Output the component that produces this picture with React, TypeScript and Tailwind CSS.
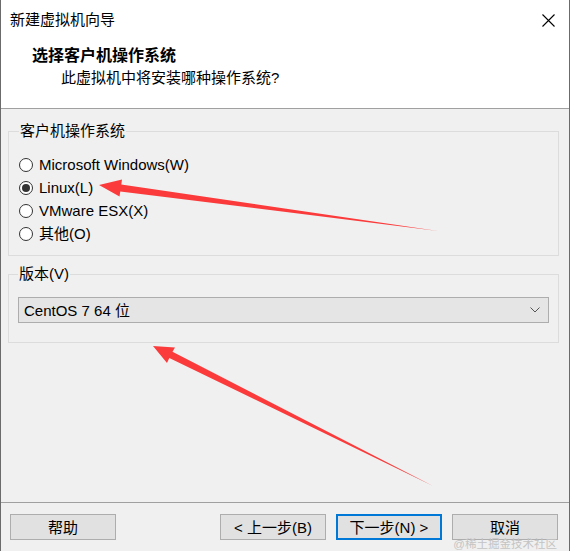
import React from "react";

const FONT = { fontFamily: '"Liberation Sans", "Noto Sans CJK SC", sans-serif' };

const options = [
  { label: "Microsoft Windows(W)", checked: false },
  { label: "Linux(L)", checked: true },
  { label: "VMware ESX(X)", checked: false },
  { label: "其他(O)", checked: false },
];

function Radio({ checked }: { checked: boolean }) {
  return (
    <span className="w-[14px] h-[14px] rounded-full border border-[#333] bg-white flex items-center justify-center shrink-0">
      {checked && <span className="w-[8px] h-[8px] rounded-full bg-[#333]" />}
    </span>
  );
}

function Btn({ label, primary }: { label: string; primary?: boolean }) {
  return (
    <button
      className={`w-[106px] h-[26px] bg-[#e1e1e1] text-[15px] leading-none text-black flex items-center justify-center ${
        primary ? "border-2 border-[#0078d7]" : "border border-[#adadad]"
      }`}
    >
      {label}
    </button>
  );
}

function Arrows() {
  return (
    <svg className="absolute inset-0 pointer-events-none" width="570" height="551" viewBox="0 0 570 551">
      <polygon
        fill="#fb3b3b"
        points="98,185 121,179.5 120.3,184.4 437,231 119.3,191.4 118.5,196.5"
      />
      <polygon
        fill="#fb3b3b"
        points="152,346 174,347.5 171.5,351.8 432,486 168.3,358 166,363"
      />
    </svg>
  );
}

export default function App() {
  return (
    <div
      className="relative w-[570px] h-[551px] bg-[#f0f0f0] border-x border-[#6b6b6b] flex flex-col text-black"
      style={FONT}
    >
      {/* top white header */}
      <div className="bg-white h-[109px] border-b border-[#a0a0a0] shrink-0">
        <div className="h-[40px] flex items-center justify-between pl-[9px] pr-[14px]">
          <span className="text-[15px]">新建虚拟机向导</span>
          <svg width="13" height="13" viewBox="0 0 13 13">
            <path d="M0.5 0.5 L12.5 12.5 M12.5 0.5 L0.5 12.5" stroke="#000" strokeWidth="1.1" />
          </svg>
        </div>
        <div className="pl-[31px] mt-[5px] text-[16px] font-bold leading-[22px]">选择客户机操作系统</div>
        <div className="pl-[60px] text-[15px] leading-[22px]">此虚拟机中将安装哪种操作系统?</div>
      </div>

      {/* body */}
      <div className="flex-1 flex flex-col">
        <fieldset className="ml-[7px] mr-[10px] mt-[12px] border border-[#dcdcdc] pl-[10px] pt-[12px] pb-[10px]">
          <legend className="px-[1px] text-[15px] leading-[20px]">客户机操作系统</legend>
          <div className="flex flex-col">
            {options.map((o) => (
              <div key={o.label} className="h-[23px] flex items-center gap-[6px]">
                <Radio checked={o.checked} />
                <span className="text-[15px] leading-none">{o.label}</span>
              </div>
            ))}
          </div>
        </fieldset>

        <fieldset className="ml-[7px] mr-[10px] mt-[8px] border border-[#dcdcdc] px-[9px] pt-[13px] pb-[19px]">
          <legend className="px-[1px] text-[15px] leading-[20px]">版本(V)</legend>
          <div className="h-[26px] bg-[#e5e5e5] border border-[#adadad] flex items-center justify-between pl-[5px] pr-[8px]">
            <span className="text-[15px] leading-none">CentOS 7 64 位</span>
            <svg width="10" height="6" viewBox="0 0 10 6">
              <path d="M0.5 0.5 L5 5 L9.5 0.5" stroke="#555" strokeWidth="1" fill="none" />
            </svg>
          </div>
        </fieldset>
      </div>

      {/* footer */}
      <div className="h-[49px] border-t border-[#a0a0a0] shrink-0 flex items-start pt-[11px] pl-[9px] pr-[11px]">
        <Btn label="帮助" />
        <div className="flex-1" />
        <div className="flex gap-[10px]">
          <Btn label="< 上一步(B)" />
          <Btn label="下一步(N) >" primary />
          <Btn label="取消" />
        </div>
      </div>

      <Arrows />
      <span className="absolute right-[12px] bottom-0 text-[11.5px] leading-[14px] text-[#c4c4c4]">
        @稀土掘金技术社区
      </span>
    </div>
  );
}
